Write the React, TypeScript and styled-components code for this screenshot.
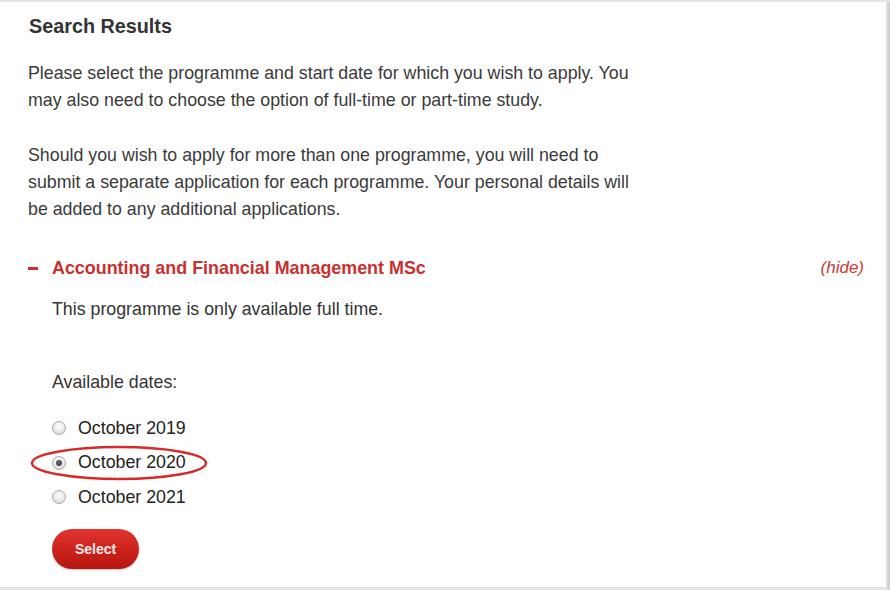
import React from "react";
import styled, { createGlobalStyle } from "styled-components";

const Global = createGlobalStyle`
  html, body { margin: 0; padding: 0; background: #ffffff; }
  body { font-family: Arial, "Liberation Sans", sans-serif; }
`;

const Frame = styled.div`
  width: 890px;
  height: 590px;
  box-sizing: border-box;
  background: linear-gradient(to right, #e4e4e4 0, #e4e4e4 886px, #d6d6d6 888px, #cfcfcf 890px);
  border-top: 2px solid #e3e3e3;
  display: flex;
  flex-direction: column;
`;

const Panel = styled.div`
  width: 886px;
  height: 585px;
  box-sizing: border-box;
  background: #ffffff;
  padding: 12px 0 0 28px;
  color: #333333;
  font-size: 17.8px;
`;

const Heading = styled.h2`
  margin: 0 0 0 1px;
  font-size: 19.8px;
  line-height: 24px;
  font-weight: bold;
  color: #333333;
`;

const Para = styled.p<{ $top: number }>`
  margin: ${(p) => p.$top}px 0 0 0;
  width: 612px;
  line-height: 27px;
  font-size: 17.8px;
  color: #3a3a3a;
`;

const ProgrammeRow = styled.div`
  margin-top: 33px;
  display: flex;
  align-items: center;
  height: 24px;
  padding-right: 22px;
`;

const Dash = styled.span`
  width: 10px;
  height: 3px;
  background: #c8312f;
  margin-right: 14px;
`;

const Title = styled.span`
  flex: 1;
  font-weight: bold;
  color: #c8312f;
  font-size: 17.9px;
`;

const Hide = styled.span`
  font-style: italic;
  color: #c63a3a;
  font-size: 17px;
`;

const Body = styled.div`
  padding-left: 24px;
`;

const Line = styled.div<{ $top: number }>`
  margin-top: ${(p) => p.$top}px;
  line-height: 24px;
  font-size: 17.8px;
  color: #333;
`;

const Options = styled.div`
  margin-top: 17px;
  display: flex;
  flex-direction: column;
`;

const Option = styled.label`
  position: relative;
  display: flex;
  align-items: center;
  height: 34.5px;
  font-size: 17.8px;
  color: #222;
`;

const Radio = styled.span<{ $checked?: boolean }>`
  width: 12px;
  height: 12px;
  border-radius: 50%;
  border: 1px solid #a9a9a9;
  background: radial-gradient(circle at 50% 35%, #ffffff 0%, #e9e9e9 55%, #cfcfcf 100%);
  margin-right: 12px;
  display: flex;
  align-items: center;
  justify-content: center;
  &::after {
    content: "";
    display: ${(p) => (p.$checked ? "block" : "none")};
    width: 6px;
    height: 6px;
    border-radius: 50%;
    background: radial-gradient(circle at 40% 40%, #6a6a6a, #2c2c2c);
  }
`;

const Ring = styled.svg`
  position: absolute;
  left: -22px;
  top: 0px;
  overflow: visible;
  pointer-events: none;
`;

const SelectButton = styled.button`
  margin-top: 14px;
  width: 87px;
  height: 40px;
  border: none;
  border-radius: 20px;
  background: linear-gradient(to bottom, #e0352e 0%, #cd231d 50%, #b5170f 100%);
  box-shadow: 0 1px 2px rgba(0, 0, 0, 0.25);
  color: #fbeaea;
  font-family: Arial, "Liberation Sans", sans-serif;
  font-weight: bold;
  font-size: 14px;
  cursor: pointer;
`;

const dates = ["October 2019", "October 2020", "October 2021"];

export default function App() {
  return (
    <>
      <Global />
      <Frame>
        <Panel>
          <Heading>Search Results</Heading>
          <Para $top={22}>
            Please select the programme and start date for which you wish to apply. You
            may also need to choose the option of full-time or part-time study.
          </Para>
          <Para $top={28}>
            Should you wish to apply for more than one programme, you will need to
            submit a separate application for each programme. Your personal details will
            be added to any additional applications.
          </Para>
          <ProgrammeRow>
            <Dash />
            <Title>Accounting and Financial Management MSc</Title>
            <Hide>(hide)</Hide>
          </ProgrammeRow>
          <Body>
            <Line $top={17}>This programme is only available full time.</Line>
            <Line $top={49}>Available dates:</Line>
            <Options>
              {dates.map((d, i) => (
                <Option key={d}>
                  <Radio $checked={i === 1} />
                  {d}
                  {i === 1 && (
                    <Ring width="178" height="34">
                      <ellipse cx="89" cy="17" rx="87" ry="16" fill="none" stroke="#d62b2b" strokeWidth="2.5" />
                    </Ring>
                  )}
                </Option>
              ))}
            </Options>
            <SelectButton>Select</SelectButton>
          </Body>
        </Panel>
      </Frame>
    </>
  );
}
